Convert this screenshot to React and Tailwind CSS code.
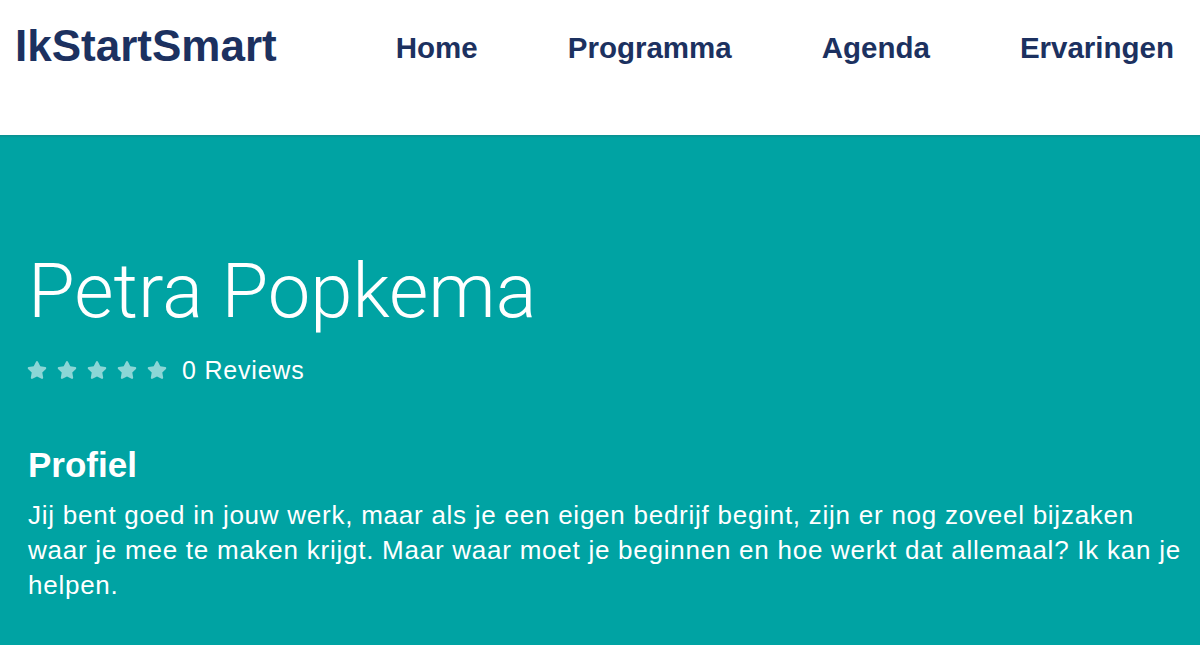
import React from "react";
import { FaStar } from "react-icons/fa";

export default function App() {
  const nav = ["Home", "Programma", "Agenda", "Ervaringen"];
  return (
    <div className="w-[1200px] h-[645px] overflow-hidden bg-[#00a3a3] font-['Liberation_Sans',Arial,sans-serif]">
      <header className="h-[135px] bg-white flex items-start justify-between pl-[15px] pr-[26px]">
        <div className="mt-[20px] text-[44px] leading-[51px] font-bold text-[#1c3160]">IkStartSmart</div>
        <nav className="mt-[31px] flex gap-[90px]">
          {nav.map((n) => (
            <a key={n} className="text-[29.5px] leading-[33px] font-bold text-[#1c3160]">{n}</a>
          ))}
        </nav>
      </header>
      <div className="h-[3px] bg-gradient-to-b from-[#0a8f8f] to-[#00a3a3]"></div>
      <main className="pl-[28px] pr-[12px] text-white">
        <h1 className="mt-[115px] text-[76px] leading-[76px] font-light font-['Roboto',sans-serif]">Petra Popkema</h1>
        <div className="mt-[26px] h-[30px] flex items-center">
          <div className="flex gap-[10px] text-white/55 ml-[-1px]">
            {[0, 1, 2, 3, 4].map((i) => (
              <FaStar key={i} className="w-[20px] h-[20px]" />
            ))}
          </div>
          <span className="ml-[15px] text-[25px] leading-[30px] tracking-[0.8px]">0 Reviews</span>
        </div>
        <h2 className="mt-[60px] text-[35px] leading-[40px] font-bold">Profiel</h2>
        <p className="mt-[13px] text-[26px] leading-[35px] tracking-[0.75px] max-w-[1160px]">
          Jij bent goed in jouw werk, maar als je een eigen bedrijf begint, zijn er nog zoveel bijzaken waar je mee te maken krijgt. Maar waar moet je beginnen en hoe werkt dat allemaal? Ik kan je helpen.
        </p>
      </main>
    </div>
  );
}
